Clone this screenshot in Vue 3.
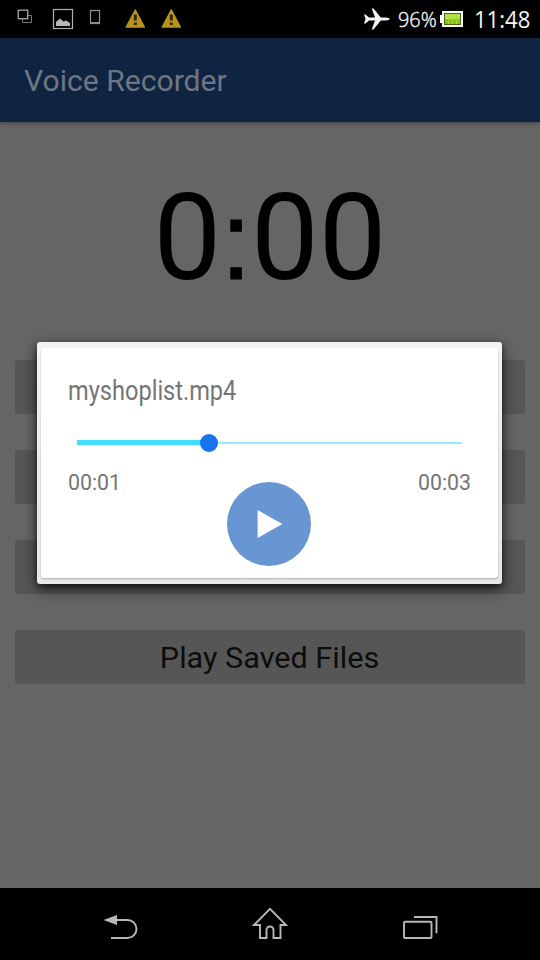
<script setup>
import { ref, computed } from 'vue'

const fileName = ref('myshoplist.mp4')
const progress = ref(34.3)
const fill = computed(() => `${progress.value}%`)
const buttons = ['', '', '', 'Play Saved Files']
</script>

<template>
  <div class="screen">
    <header class="status">
      <svg class="notes" width="200" height="38" viewBox="0 0 200 38" fill="none">
        <path d="M22.5 19v3.500h9v-7H28" stroke="#777" />
        <rect x="18.200" y="10.200" width="9.500" height="8.500" stroke="#a8a8a8" stroke-width="1.300" />
        <rect x="53.500" y="9.500" width="19" height="19" stroke="#b0b0b0" stroke-width="1.200" />
        <path d="M56 26v-4l4-3.500 3.500 3 2.500-1 4 2.500V26z" fill="#b8b8b8" />
        <rect x="90.500" y="10.500" width="9" height="13" stroke="#949494" stroke-width="1.200" />
        <path d="M90 22h10v1.500H90z" fill="#888" />
        <g v-for="x in [135.300, 171.300]" :key="x" :transform="`translate(${x} 0)`">
          <path d="M0 10 9 27H-9z" fill="#b8951a" stroke="#b8951a" stroke-width="1.500" stroke-linejoin="round" />
          <path d="M-1.500 14.500h3v6h-3zM-1.500 22.500h3v2.500h-3z" fill="#332805" />
        </g>
      </svg>
      <div class="system">
        <svg width="28" height="24" viewBox="0 0 28 24">
          <path d="M1 7.500h1.500l3.500 3h6L8.700 1.500h1.800l7.300 9h5.200q3 .4 4 1.500-1 1.100-4 1.500h-5.200l-7.300 9H8.700L12 13.500H6L2.500 16.500H1L2.500 12z" fill="#f2f2f2" />
        </svg>
        <span class="percent"><span>96%</span></span>
        <svg class="battery" width="24" height="18" viewBox="0 0 24 18">
          <path d="M0 5h2V1h21v16H2v-4H0z" fill="#fff" />
          <path d="M4 3h17v12H4z" fill="#4c6414" />
          <path d="M5 4h15v10H5z" fill="#83c90c" />
          <path d="M5 4h15v5H5z" fill="#b5e34d" />
          <path d="M8.500 4v10M12.500 4v10M16.500 4v10" stroke="#a3da38" />
        </svg>
        <span class="clock"><span>11:48</span></span>
      </div>
    </header>

    <div class="appbar"><h1>Voice Recorder</h1></div>

    <main class="content">
      <div class="timer"><span>0</span><span class="colon">:</span><span>00</span></div>
      <div class="buttons">
        <button v-for="(label, i) in buttons" :key="i"><span>{{ label }}</span></button>
      </div>
    </main>

    <nav class="nav">
      <svg width="540" height="72" viewBox="0 0 540 72" fill="none" stroke="#b8b8b8" stroke-width="1.900">
        <path d="M116 32h11.500a9 9 0 0 1 0 18H111" />
        <path d="M103.500 32 117 27v10z" fill="#b8b8b8" stroke="none" />
        <path d="M254 37 270 20.800 286 37H280.500v13H273.500v-8a3.500 3.500 0 0 0-7 0v8H260V37z" />
        <rect x="404" y="33.700" width="27.500" height="16.300" rx="1" />
        <path d="M414 29h22.500v16.300" />
      </svg>
    </nav>

    <section class="dialog">
      <div class="card">
        <h2><span>{{ fileName }}</span></h2>
        <div class="slider">
          <div class="fill" :style="{ width: fill }"></div>
          <div class="thumb" :style="{ left: fill }"></div>
        </div>
        <div class="times"><span>00:01</span><span class="end">00:03</span></div>
        <div class="play">
          <svg width="84" height="84" viewBox="0 0 84 84">
            <path d="M30.600 28v28L55.300 42z" fill="#fff" />
          </svg>
        </div>
      </div>
    </section>
  </div>
</template>

<style>
body { margin: 0; background: #656565; }
</style>

<style scoped>
.screen {
  position: relative;
  width: 540px;
  height: 960px;
  display: flex;
  flex-direction: column;
  overflow: hidden;
  background: #656565;
  font-family: Roboto, "Noto Sans", sans-serif;
}
.status {
  height: 38px;
  background: #000;
  display: flex;
  justify-content: space-between;
  color: #f5f5f5;
  font-family: "Open Sans", "Noto Sans", sans-serif;
  font-weight: 300;
}
.system {
  display: flex;
  align-items: center;
  width: 177px;
  white-space: nowrap;
}
.percent {
  width: 38px;
  margin-left: 7px;
  font-size: 20.5px;
  line-height: 38px;
  -webkit-text-stroke: 0.4px #f5f5f5;
}
.percent span {
  display: inline-block;
  transform: scaleX(0.97);
  transform-origin: 0 50%;
}
.battery { margin-left: 4px; }
.clock {
  margin-left: 10px;
  font-size: 23px;
  line-height: 38px;
  font-weight: 400;
}
.clock span {
  display: inline-block;
  transform: scaleX(0.96);
  transform-origin: 0 50%;
}
.appbar {
  height: 84px;
  box-sizing: border-box;
  padding: 1px 0 0 24px;
  display: flex;
  align-items: center;
  background: #0f2441;
  box-shadow: 0 1px 4px rgba(0, 0, 0, 0.4);
}
.appbar h1 {
  margin: 0;
  font-size: 30px;
  line-height: 35px;
  font-weight: 400;
  color: #6c7684;
  transform: scaleX(1.004);
  transform-origin: 0 50%;
}
.content { flex: 1; }
.timer {
  height: 238px;
  box-sizing: border-box;
  padding-top: 45px;
  display: flex;
  justify-content: center;
  align-items: baseline;
  font-size: 120.5px;
  line-height: 141px;
  color: #000;
}
.colon {
  margin: 0 -0.6px;
  font-family: "Liberation Sans", sans-serif;
  font-size: 112px;
  -webkit-text-stroke: 0.8px #000;
}
.buttons {
  display: flex;
  flex-direction: column;
  gap: 36px;
  padding: 0 15px;
}
.buttons button {
  height: 54px;
  border: 0;
  padding: 0;
  border-radius: 3px;
  background: #565656;
  color: #0c0c0c;
  font: 400 30px/54px Roboto, sans-serif;
}
.buttons span {
  display: inline-block;
  padding-top: 1px;
  line-height: 53px;
  transform: scaleX(1.02);
}
.nav { height: 72px; background: #000; }
.nav svg { display: block; }
.dialog {
  position: absolute;
  left: 37px;
  top: 342px;
  width: 465px;
  height: 242px;
  box-sizing: border-box;
  padding: 6px 4px;
  border-radius: 3px;
  background: linear-gradient(#f3f3f3, #ececec 50%, #e8e8e8);
  box-shadow: 0 5px 14px rgba(0, 0, 0, 0.7), 0 2px 4px rgba(0, 0, 0, 0.4);
}
.card {
  height: 230px;
  box-sizing: border-box;
  padding: 27px 27px 0;
  border-radius: 3px;
  background: #fff;
  box-shadow: 0 1px 2px rgba(0, 0, 0, 0.25);
  color: #757575;
}
.card h2 {
  margin: 0;
  height: 32px;
  font-size: 27px;
  line-height: 32px;
  font-weight: 400;
}
.card h2 span {
  display: inline-block;
  transform: scaleX(0.873);
  transform-origin: 0 50%;
}
.slider {
  position: relative;
  height: 2px;
  margin: 35px 9px 0;
  background: #93edfa;
}
.fill {
  position: absolute;
  left: 0;
  top: -2px;
  height: 5px;
  background: #40e0fc;
}
.thumb {
  position: absolute;
  top: -8px;
  width: 18px;
  height: 18px;
  margin-left: -9px;
  border-radius: 50%;
  background: #1872ec;
}
.times {
  display: flex;
  justify-content: space-between;
  margin-top: 25px;
  height: 28px;
  font-size: 21.3px;
  line-height: 28px;
}
.play {
  width: 84px;
  height: 84px;
  margin: -15px 0 0 159px;
  border-radius: 50%;
  background: #6796d2;
}
.play svg { display: block; }
</style>
